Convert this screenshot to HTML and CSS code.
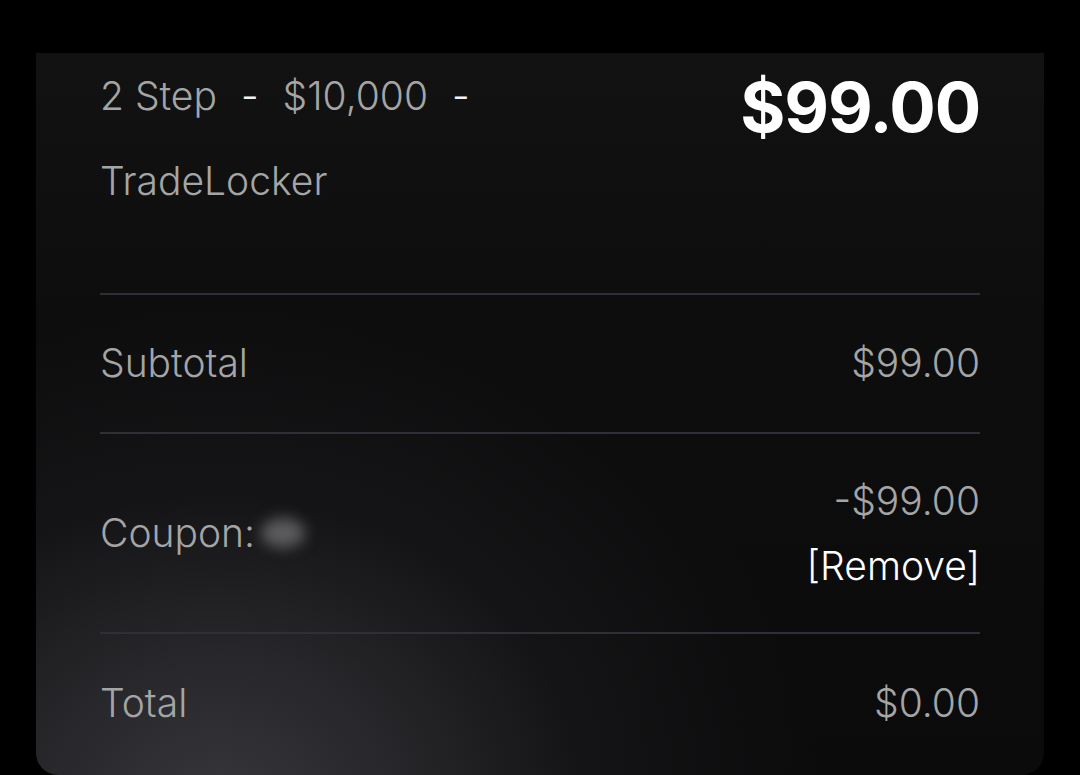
FILE: index.html
```html
<!DOCTYPE html>
<html lang="en">
<head>
<meta charset="utf-8">
<title>Order summary</title>
<link rel="stylesheet" href="styles.css">
</head>
<body>
<main class="page">
  <section class="card">
    <div class="product">
      <div class="product-name">
        <div class="name-line">2 Step<span class="dash">-</span>$10,000<span class="dash">-</span></div>
        <div class="name-line">TradeLocker</div>
      </div>
      <div class="product-price">$99.00</div>
    </div>
    <div class="row">
      <div class="label">Subtotal</div>
      <div class="value">$99.00</div>
    </div>
    <div class="row row-coupon">
      <div class="label">Coupon:<span class="coupon-code"></span></div>
      <div class="value value-stack">
        <div>-$99.00</div>
        <a class="remove" href="#">[Remove]</a>
      </div>
    </div>
    <div class="row row-total">
      <div class="label">Total</div>
      <div class="value">$0.00</div>
    </div>
  </section>
</main>
</body>
</html>
```

FILE: styles.css
```css
html, body {
  margin: 0;
  padding: 0;
  background: #000;
  height: 100%;
  overflow: hidden;
}

body {
  font-family: Inter, "Noto Sans", "Liberation Sans", sans-serif;
  font-weight: 300;
  color: #a4a6a6;
}

.page {
  padding: 53px 36px 0;
  height: 775px;
  box-sizing: border-box;
}

.card {
  height: 722px;
  box-sizing: border-box;
  padding: 0 64px;
  border-radius: 0 0 22px 22px;
  background:
    radial-gradient(ellipse 600px 500px at 18% 104%, rgba(54, 54, 59, 1) 0%, rgba(44, 44, 48, 0.85) 30%, rgba(30, 30, 33, 0.45) 62%, rgba(14, 14, 15, 0) 100%),
    linear-gradient(180deg, #121213 0%, #0d0d0e 40%, #0b0b0c 100%);
}

.product {
  display: flex;
  justify-content: space-between;
  align-items: flex-start;
  height: 240px;
  border-bottom: 2px solid #2f2f37;
}

.product-name {
  font-size: 39px;
  line-height: 85px;
}

.name-line {
  white-space: nowrap;
}

.dash {
  margin: 0 24px;
  color: #f2f2f2;
}

.product-price {
  margin-top: 18px;
  font-size: 69px;
  line-height: 72px;
  font-weight: 700;
  color: #fff;
  letter-spacing: -1.2px;
}

.row {
  display: flex;
  justify-content: space-between;
  align-items: center;
  padding: 45px 0 46px;
  font-size: 39px;
  line-height: 46px;
  border-bottom: 2px solid #2f2f37;
}

.row-coupon {
  padding: 34px 0 34px;
}

.row-total {
  border-bottom: none;
  padding-top: 46px;
}

.label {
  display: flex;
  align-items: center;
}

.coupon-code {
  display: inline-block;
  width: 44px;
  height: 30px;
  margin-left: 6px;
  border-radius: 50%;
  background: #5c5c5e;
  filter: blur(7px);
}

.value {
  text-align: right;
}

.value-stack {
  line-height: 65px;
}

.remove {
  color: #fff;
  text-decoration: none;
}
```
